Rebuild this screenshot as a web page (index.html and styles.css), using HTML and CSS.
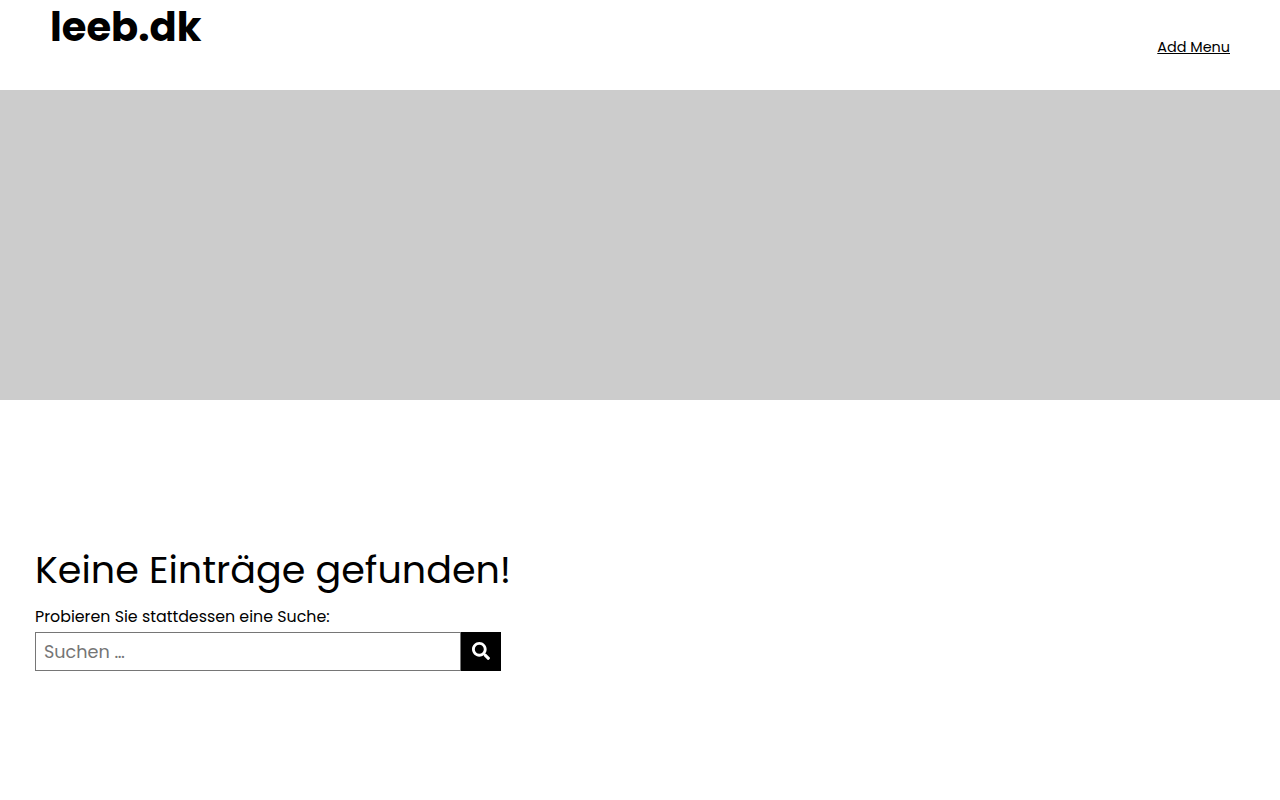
FILE: index.html
```html
<!DOCTYPE html>
<html lang="de">
<head>
    <meta charset="UTF-8">
    <meta name="viewport" content="width=device-width, initial-scale=1.0">
    <title>leeb.dk</title>
    <link rel="stylesheet" href="styles.css">
</head>
<body>
    <header class="site-header">
        <a class="site-title" href="#">leeb.dk</a>
        <a class="add-menu" href="#">Add Menu</a>
    </header>
    <div class="header-image"></div>
    <main class="content">
        <h1 class="page-title">Keine Einträge gefunden!</h1>
        <p class="hint">Probieren Sie stattdessen eine Suche:</p>
        <form class="search-form">
            <input class="search-field" type="search" placeholder="Suchen …">
            <button class="search-submit" type="button" aria-label="Suchen">
                <svg viewBox="0 0 512 512" width="18" height="18"><path fill="#fff" d="M505 442.7L405.3 343c-4.500-4.500-10.600-7-17-7H372c27.600-35.300 44-79.700 44-128C416 93.100 322.900 0 208 0S0 93.100 0 208s93.100 208 208 208c48.300 0 92.700-16.400 128-44v16.300c0 6.400 2.500 12.500 7 17l99.700 99.700c9.400 9.400 24.600 9.400 33.900 0l28.300-28.300c9.400-9.400 9.400-24.600.1-34zM208 336c-70.700 0-128-57.200-128-128 0-70.700 57.200-128 128-128 70.700 0 128 57.200 128 128 0 70.700-57.200 128-128 128z"/></svg>
            </button>
        </form>
    </main>
</body>
</html>
```

FILE: styles.css
```css
body {
    margin: 0;
    background: #fff;
    color: #000;
    font-family: 'Poppins', 'Open Sans', 'Noto Sans', sans-serif;
}
.site-header {
    display: flex;
    justify-content: space-between;
    align-items: flex-start;
    height: 90px;
    padding: 0 50px;
}
.site-title {
    font-size: 40px;
    font-weight: 700;
    line-height: 54px;
    color: #000;
    text-decoration: none;
}
.add-menu {
    margin-top: 37px;
    font-size: 14.4px;
    line-height: 20px;
    color: #000;
}
.header-image {
    height: 310px;
    background: #ccc;
}
.content {
    padding: 145px 35px 0;
}
.page-title {
    margin: 0;
    font-size: 38.08px;
    font-weight: 400;
    line-height: 50px;
}
.hint {
    margin: 9px 0 2px;
    font-size: 15.84px;
    line-height: 26px;
}
.search-form {
    display: flex;
    width: 466px;
    height: 39px;
}
.search-field {
    flex: 1;
    min-width: 0;
    box-sizing: border-box;
    height: 39px;
    padding: 0 8px;
    border: 1px solid #767676;
    border-radius: 0;
    font: inherit;
    font-size: 17.6px;
    outline: none;
}
.search-field::placeholder {
    color: #757575;
}
.search-submit {
    display: flex;
    align-items: center;
    justify-content: center;
    width: 40px;
    height: 39px;
    padding: 0 0 2px;
    border: none;
    background: #000;
}
```
